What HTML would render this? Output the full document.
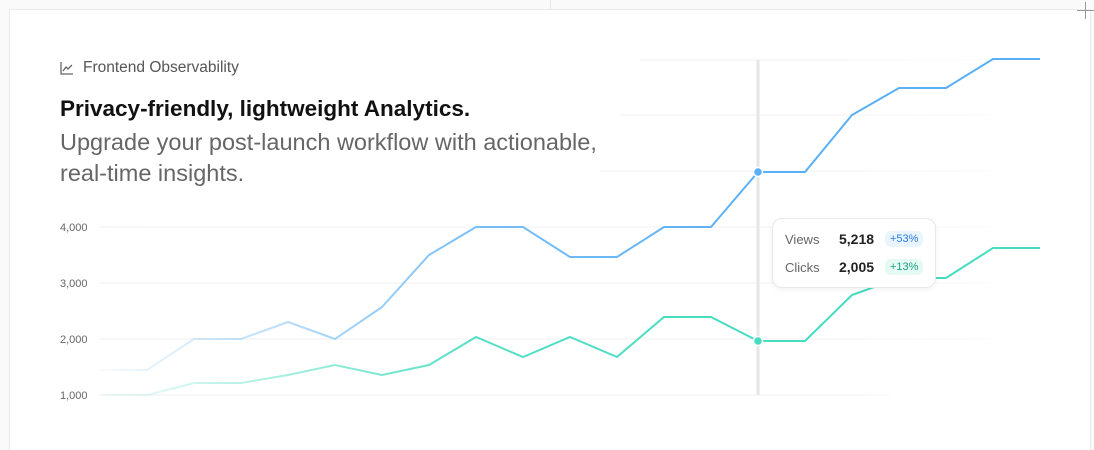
<!DOCTYPE html>
<html><head><meta charset="utf-8"><style>
body{margin:0;width:1094px;height:447px;background:#fafafa;overflow:hidden;font-family:"Liberation Sans",sans-serif;position:relative}
.card{position:absolute;left:9px;top:9px;width:1080px;height:440px;background:#fff;border-left:1px solid #ebebeb;border-top:1px solid #ebebeb;border-right:1px solid #ebebeb}
.t{position:absolute;left:60px;color:#111;white-space:nowrap}
.tip{position:absolute;left:772px;top:218px;width:162px;height:68px;background:#fff;border:1px solid #e8e8e8;border-radius:10px;box-shadow:0 2px 6px rgba(0,0,0,.05);font-size:13px}
.row{position:absolute;left:12px;display:flex;align-items:center}
.lab{width:54px;color:#666}.val{width:46px;font-weight:bold;color:#222;font-size:14px}
.b{font-size:11px;padding:2px 5px;border-radius:6px}
</style></head><body>
<div style="position:absolute;left:550px;top:0;width:1px;height:9px;background:#e5e5e5"></div>
<div class="card"></div>
<div style="position:absolute;left:1077px;top:10px;width:17px;height:1px;background:#999"></div>
<div style="position:absolute;left:1085px;top:2px;width:1px;height:17px;background:#999"></div>
<svg style="position:absolute;left:0;top:0" width="1094" height="447">
<defs>
<linearGradient id="fb" x1="100" x2="760" gradientUnits="userSpaceOnUse"><stop offset="0" stop-color="#5ab0f5" stop-opacity="0.05"/><stop offset="0.55" stop-color="#5ab0f5" stop-opacity="0.8"/><stop offset="1" stop-color="#5ab0f5"/></linearGradient>
<linearGradient id="fg" x1="100" x2="760" gradientUnits="userSpaceOnUse"><stop offset="0" stop-color="#45dcc0" stop-opacity="0.05"/><stop offset="0.55" stop-color="#45dcc0" stop-opacity="0.9"/><stop offset="1" stop-color="#45dcc0"/></linearGradient>
<linearGradient id="gl" x1="60" x2="1040" gradientUnits="userSpaceOnUse"><stop offset="0" stop-color="#eee"/><stop offset="0.8" stop-color="#f2f2f2"/><stop offset="1" stop-color="#fff"/></linearGradient>
</defs>
<g stroke="url(#gl)" stroke-width="1">
<line x1="100" y1="227" x2="1040" y2="227"/><line x1="100" y1="283" x2="1040" y2="283"/><line x1="100" y1="339" x2="1040" y2="339"/><line x1="100" y1="395" x2="890" y2="395"/>
<line x1="640" y1="60" x2="1040" y2="60"/><line x1="620" y1="115" x2="1040" y2="115"/><line x1="600" y1="171" x2="1040" y2="171"/>
</g>
<g font-size="11" fill="#666"><text x="60" y="231">4,000</text><text x="60" y="287">3,000</text><text x="60" y="343">2,000</text><text x="60" y="399">1,000</text></g>
<line x1="758" y1="60" x2="758" y2="395" stroke="#e6e6e6" stroke-width="3"/>
<polyline fill="none" stroke="url(#fb)" stroke-width="2" points="100,370 147,370 194,339 241,339 288,322 335,339 382,307 429,255 476,227 523,227 570,257 617,257 664,227 711,227 758,172 805,172 852,115 899,88 946,88 993,59 1040,59"/>
<polyline fill="none" stroke="url(#fg)" stroke-width="2" points="100,395 147,395 194,383 241,383 288,375 335,365 382,375 429,365 476,337 523,357 570,337 617,357 664,317 711,317 758,341 805,341 852,295 899,278 946,278 993,248 1040,248"/>
<circle cx="758" cy="172" r="4.5" fill="#5ab0f5" stroke="#fff" stroke-width="1.5"/>
<circle cx="758" cy="341" r="4.5" fill="#45dcc0" stroke="#fff" stroke-width="1.5"/>
<g stroke="#666" stroke-width="1.3" fill="none"><path d="M61 62v12h12"/><path d="M63 71l3-4 2 2 4-4"/></g>
</svg>
<div class="t" style="left:83px;top:59px;font-size:15.5px;color:#555">Frontend Observability</div>
<div class="t" style="top:96px;font-size:22.5px;font-weight:bold;letter-spacing:0">Privacy-friendly, lightweight Analytics.</div>
<div class="t" style="top:127px;font-size:23.5px;color:#666;line-height:31px;letter-spacing:0">Upgrade your post-launch workflow with actionable,<br>real-time insights.</div>
<div class="tip">
<div class="row" style="top:12px"><span class="lab">Views</span><span class="val">5,218</span><span class="b" style="background:#eaf4ff;color:#2b7be0">+53%</span></div>
<div class="row" style="top:40px"><span class="lab">Clicks</span><span class="val">2,005</span><span class="b" style="background:#e6faf4;color:#1aa384">+13%</span></div>
</div>
</body></html>
